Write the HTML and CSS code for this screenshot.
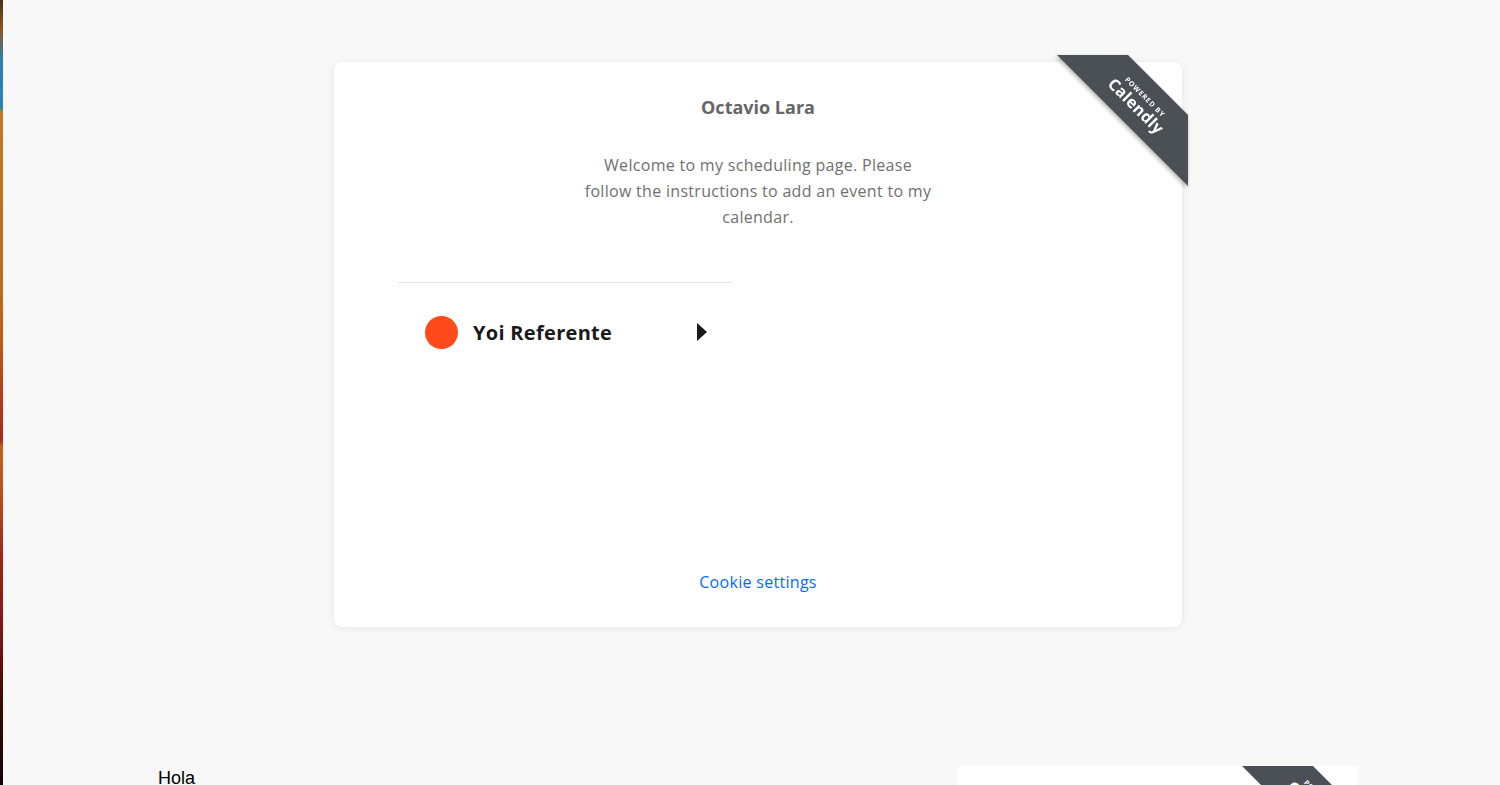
FILE: index.html
```html
<!DOCTYPE html>
<html lang="es">
<head>
<meta charset="utf-8">
<title>Octavio Lara</title>
<link rel="stylesheet" href="styles.css">
</head>
<body>
<div class="edge"></div>
<main class="page">
  <section class="embed">
    <div class="card">
      <a class="ribbon" href="#">
        <span class="ribbon-band">
          <span class="ribbon-text"><span class="ribbon-small">POWERED BY</span><span class="ribbon-big">Calendly</span></span>
        </span>
      </a>
      <header class="profile">
        <h1 class="name">Octavio Lara</h1>
        <p class="welcome">Welcome to my scheduling page. Please follow the instructions to add an event to my calendar.</p>
      </header>
      <div class="events">
        <a class="event" href="#">
          <span class="dot"></span>
          <span class="event-title">Yoi Referente</span>
          <span class="arrow"></span>
        </a>
      </div>
      <footer class="card-footer">
        <a class="cookie" href="#">Cookie settings</a>
      </footer>
    </div>
  </section>
  <section class="below">
    <p class="hola">Hola</p>
    <div class="mini">
      <span class="mini-ribbon">
        <span class="mini-text"><span class="ribbon-small">POWERED BY</span><span class="ribbon-big">Calendly</span></span>
      </span>
    </div>
  </section>
</main>
</body>
</html>
```

FILE: styles.css
```css
html, body {
  margin: 0;
  padding: 0;
  height: 785px;
  overflow: hidden;
  background: #f8f8f8;
}

body {
  position: relative;
  font-family: "Open Sans", "Lato", sans-serif;
}

.edge {
  position: absolute;
  left: 0;
  top: 0;
  width: 3px;
  height: 785px;
  z-index: 5;
  background: linear-gradient(to bottom,
    #4a3018 0px, #8a5a20 30px, #2c7fb2 60px, #2a86b8 108px,
    #c07c1c 112px, #b8741c 230px, #c06a18 300px, #c25418 350px,
    #b23a18 400px, #a82a1c 440px, #c06420 447px, #b84c1c 500px,
    #a02418 560px, #7a1412 640px, #3a0a08 700px, #140404 785px);
}

.page {
  display: flex;
  flex-direction: column;
}

.embed {
  display: flex;
  justify-content: center;
  padding: 62px 0 139px 16px;
}

.card {
  position: relative;
  width: 848px;
  height: 565px;
  box-sizing: border-box;
  background: #fff;
  border-radius: 8px;
  box-shadow: 0 1px 8px rgba(0, 0, 0, 0.08);
  display: flex;
  flex-direction: column;
  align-items: center;
  padding: 33px 64px 33px;
}

.ribbon {
  position: absolute;
  top: -7px;
  right: -6px;
  width: 131px;
  height: 131px;
  filter: drop-shadow(-1px 2px 2px rgba(0, 0, 0, 0.3));
  text-decoration: none;
}

.ribbon-band {
  position: absolute;
  inset: 0;
  background: #4a5056;
  clip-path: polygon(0 0, 71px 0, 131px 60px, 131px 131px);
}

.ribbon-text {
  position: absolute;
  left: 82px;
  top: 48px;
  transform: translate(-50%, -50%) rotate(45deg);
  display: flex;
  flex-direction: column;
  align-items: center;
  color: #fff;
  white-space: nowrap;
  line-height: 1;
}

.ribbon-small {
  font-size: 7px;
  font-weight: 700;
  letter-spacing: 0.8px;
  margin-bottom: 1px;
}

.ribbon-big {
  font-size: 16px;
  font-weight: 700;
  letter-spacing: 0.3px;
}

.profile {
  display: flex;
  flex-direction: column;
  align-items: center;
  text-align: center;
}

.name {
  margin: 0;
  font-size: 18px;
  line-height: 24px;
  font-weight: 700;
  color: #666;
}

.welcome {
  margin: 33px 0 0;
  max-width: 354px;
  font-size: 16px;
  letter-spacing: 0.3px;
  line-height: 26px;
  color: #707070;
}

.events {
  align-self: flex-start;
  margin-top: 52px;
  width: 334px;
  border-top: 1px solid #e2e2e2;
}

.event {
  display: flex;
  align-items: center;
  height: 98px;
  padding: 0 25px 0 27px;
  text-decoration: none;
}

.dot {
  width: 33px;
  height: 33px;
  border-radius: 50%;
  background: #ff4a1c;
  flex: none;
}

.event-title {
  margin-left: 15px;
  flex: 1;
  font-size: 20px;
  letter-spacing: 0.3px;
  font-weight: 700;
  color: #1a1a1a;
}

.arrow {
  width: 0;
  height: 0;
  border-top: 9.5px solid transparent;
  border-bottom: 9.5px solid transparent;
  border-left: 10px solid #1a1a1a;
}

.card-footer {
  margin-top: auto;
}

.cookie {
  font-size: 16px;
  letter-spacing: 0.3px;
  line-height: 24px;
  color: #006bff;
  text-decoration: none;
}

.below {
  display: flex;
  align-items: flex-start;
  padding-left: 158px;
}

.hola {
  margin: 2px 0 0;
  width: 800px;
  font-family: "Liberation Sans", Arial, sans-serif;
  font-size: 18px;
  color: #000;
}

.mini {
  position: relative;
  width: 400px;
  height: 120px;
  background: #fff;
  overflow: hidden;
}

.mini-ribbon {
  position: absolute;
  top: 0;
  right: 0;
  width: 116px;
  height: 116px;
  background: #4a5056;
  clip-path: polygon(0 0, 71px 0, 116px 45px, 116px 116px);
}

.mini-text {
  position: absolute;
  left: 76px;
  top: 40px;
  transform: translate(-50%, -50%) rotate(45deg);
  display: flex;
  flex-direction: column;
  align-items: center;
  color: #fff;
  white-space: nowrap;
  line-height: 1;
}
```
